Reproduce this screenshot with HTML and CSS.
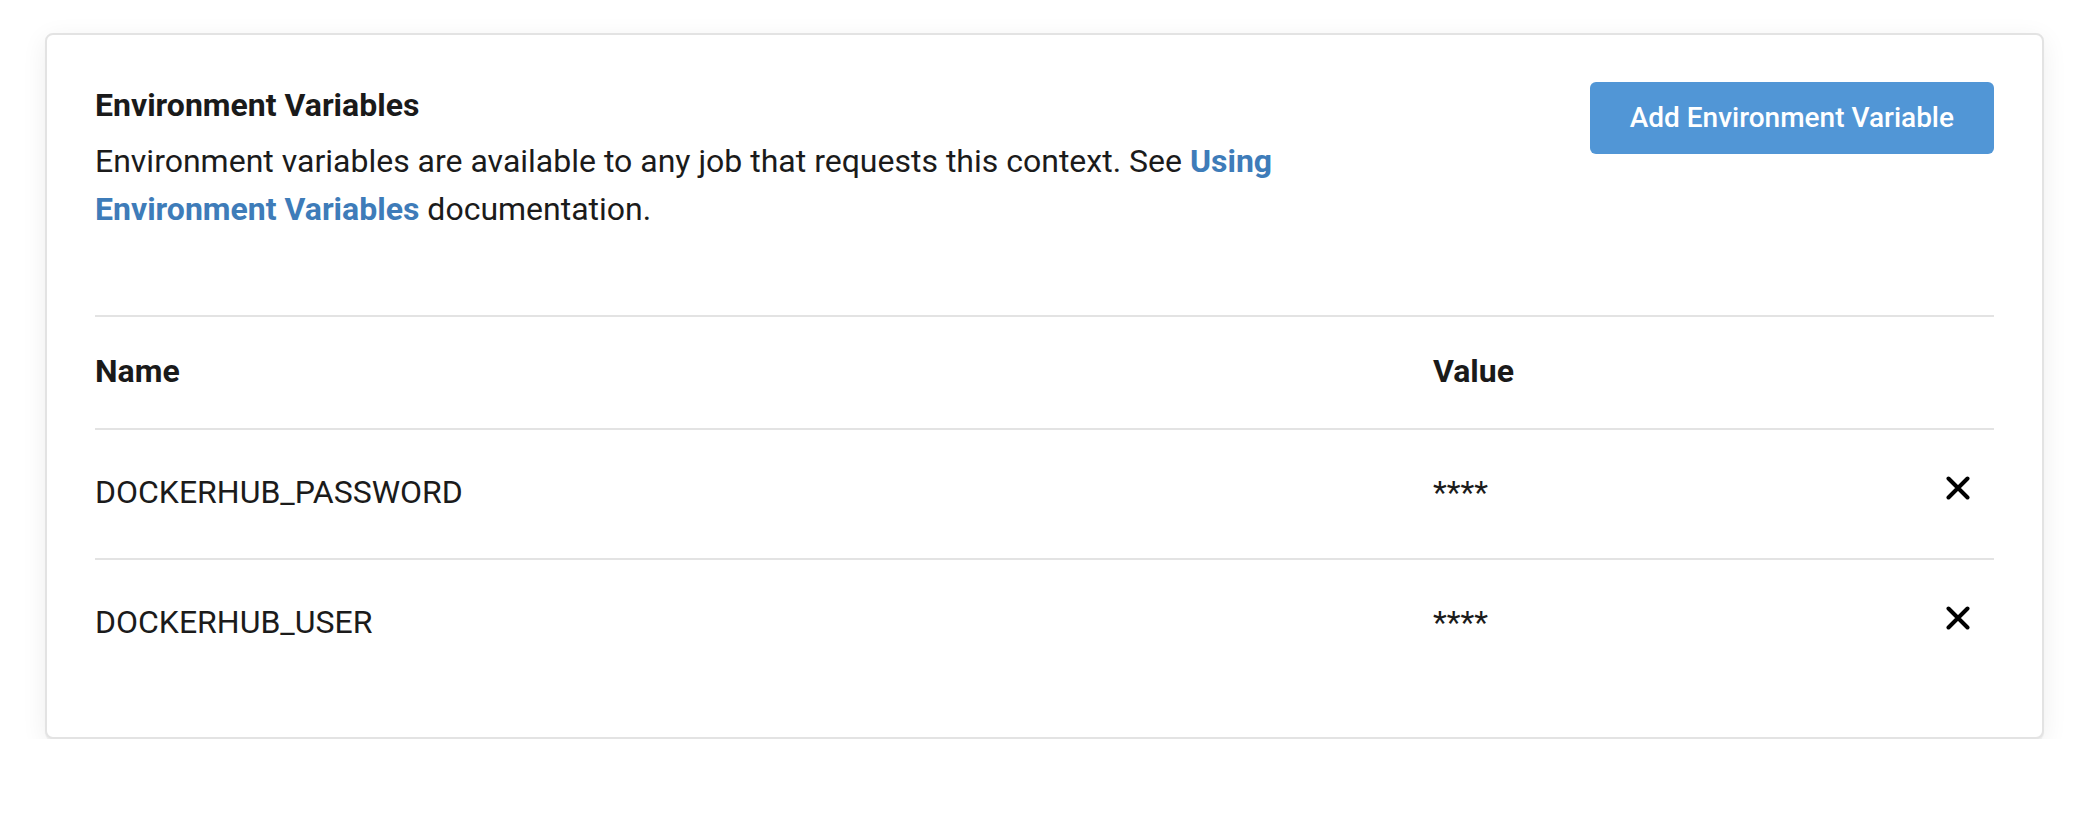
FILE: index.html
```html
<!DOCTYPE html>
<html lang="en">
<head>
<meta charset="utf-8">
<title>Environment Variables</title>
<link rel="stylesheet" href="styles.css">
</head>
<body>
<div class="page">
  <section class="card">
    <div class="card-header">
      <div class="intro">
        <h2 class="title">Environment Variables</h2>
        <p class="desc">Environment variables are available to any job that requests this context. See <a class="link" href="#">Using Environment Variables</a> documentation.</p>
      </div>
      <button class="btn-primary" type="button">Add Environment Variable</button>
    </div>
    <div class="table">
      <div class="row head">
        <div class="cell">Name</div>
        <div class="cell">Value</div>
        <div class="cell"></div>
      </div>
      <div class="row">
        <div class="cell">DOCKERHUB_PASSWORD</div>
        <div class="cell">****</div>
        <div class="cell icon-cell">
          <svg class="x-icon" viewBox="0 0 24 24" width="24" height="24" aria-hidden="true"><path d="M2.5 2.5 L21.5 21.5 M21.5 2.5 L2.5 21.5" stroke="#000" stroke-width="4" stroke-linecap="round" fill="none"/></svg>
        </div>
      </div>
      <div class="row">
        <div class="cell">DOCKERHUB_USER</div>
        <div class="cell">****</div>
        <div class="cell icon-cell">
          <svg class="x-icon" viewBox="0 0 24 24" width="24" height="24" aria-hidden="true"><path d="M2.5 2.5 L21.5 21.5 M21.5 2.5 L2.5 21.5" stroke="#000" stroke-width="4" stroke-linecap="round" fill="none"/></svg>
        </div>
      </div>
    </div>
  </section>
</div>
</body>
</html>
```
FILE: styles.css
```css
html, body {
  margin: 0;
  padding: 0;
  background: #ffffff;
}

body {
  font-family: Roboto, "Liberation Sans", Arial, sans-serif;
  color: #1b1b1b;
}

.page {
  padding: 33px 50px 0 45px;
}

.card {
  background: #ffffff;
  border: 2px solid #e3e3e3;
  border-radius: 8px;
  padding: 48px 48px 49px 48px;
  box-shadow: 0 2px 1px rgba(0, 0, 0, 0.05), 0 6px 26px rgba(0, 0, 0, 0.07);
}

.card-header {
  display: flex;
  justify-content: space-between;
  align-items: flex-start;
  margin-bottom: 82px;
}

.intro {
  max-width: 1250px;
}

.title {
  margin: 0 0 10px 0;
  font-size: 32px;
  line-height: 44px;
  font-weight: 700;
  color: #1a1a1a;
}

.desc {
  margin: 0;
  font-size: 32px;
  line-height: 48px;
  font-weight: 400;
  color: #1b1b1b;
}

.link {
  color: #3e7cb9;
  font-weight: 700;
  text-decoration: none;
}

.btn-primary {
  margin-top: -1px;
  height: 72px;
  padding: 0 40px;
  border: none;
  border-radius: 6px;
  background: #5196d6;
  color: #ffffff;
  font-family: Roboto, "Liberation Sans", Arial, sans-serif;
  font-size: 28px;
  font-weight: 500;
  line-height: 72px;
  cursor: pointer;
}

.table {
  border-top: 2px solid #e3e3e3;
}

.row {
  display: grid;
  grid-template-columns: 1338px 1fr 72px;
  font-size: 32px;
  line-height: 48px;
  padding: 38px 0 42px 0;
  border-bottom: 2px solid #e3e3e3;
}

.row:last-child {
  border-bottom: none;
}

.row.head {
  font-weight: 700;
  padding: 30px 0 33px 0;
  color: #1a1a1a;
}

.icon-cell {
  display: flex;
  justify-content: center;
  align-items: flex-start;
}

.x-icon {
  display: block;
  margin-top: 8px;
}
```
